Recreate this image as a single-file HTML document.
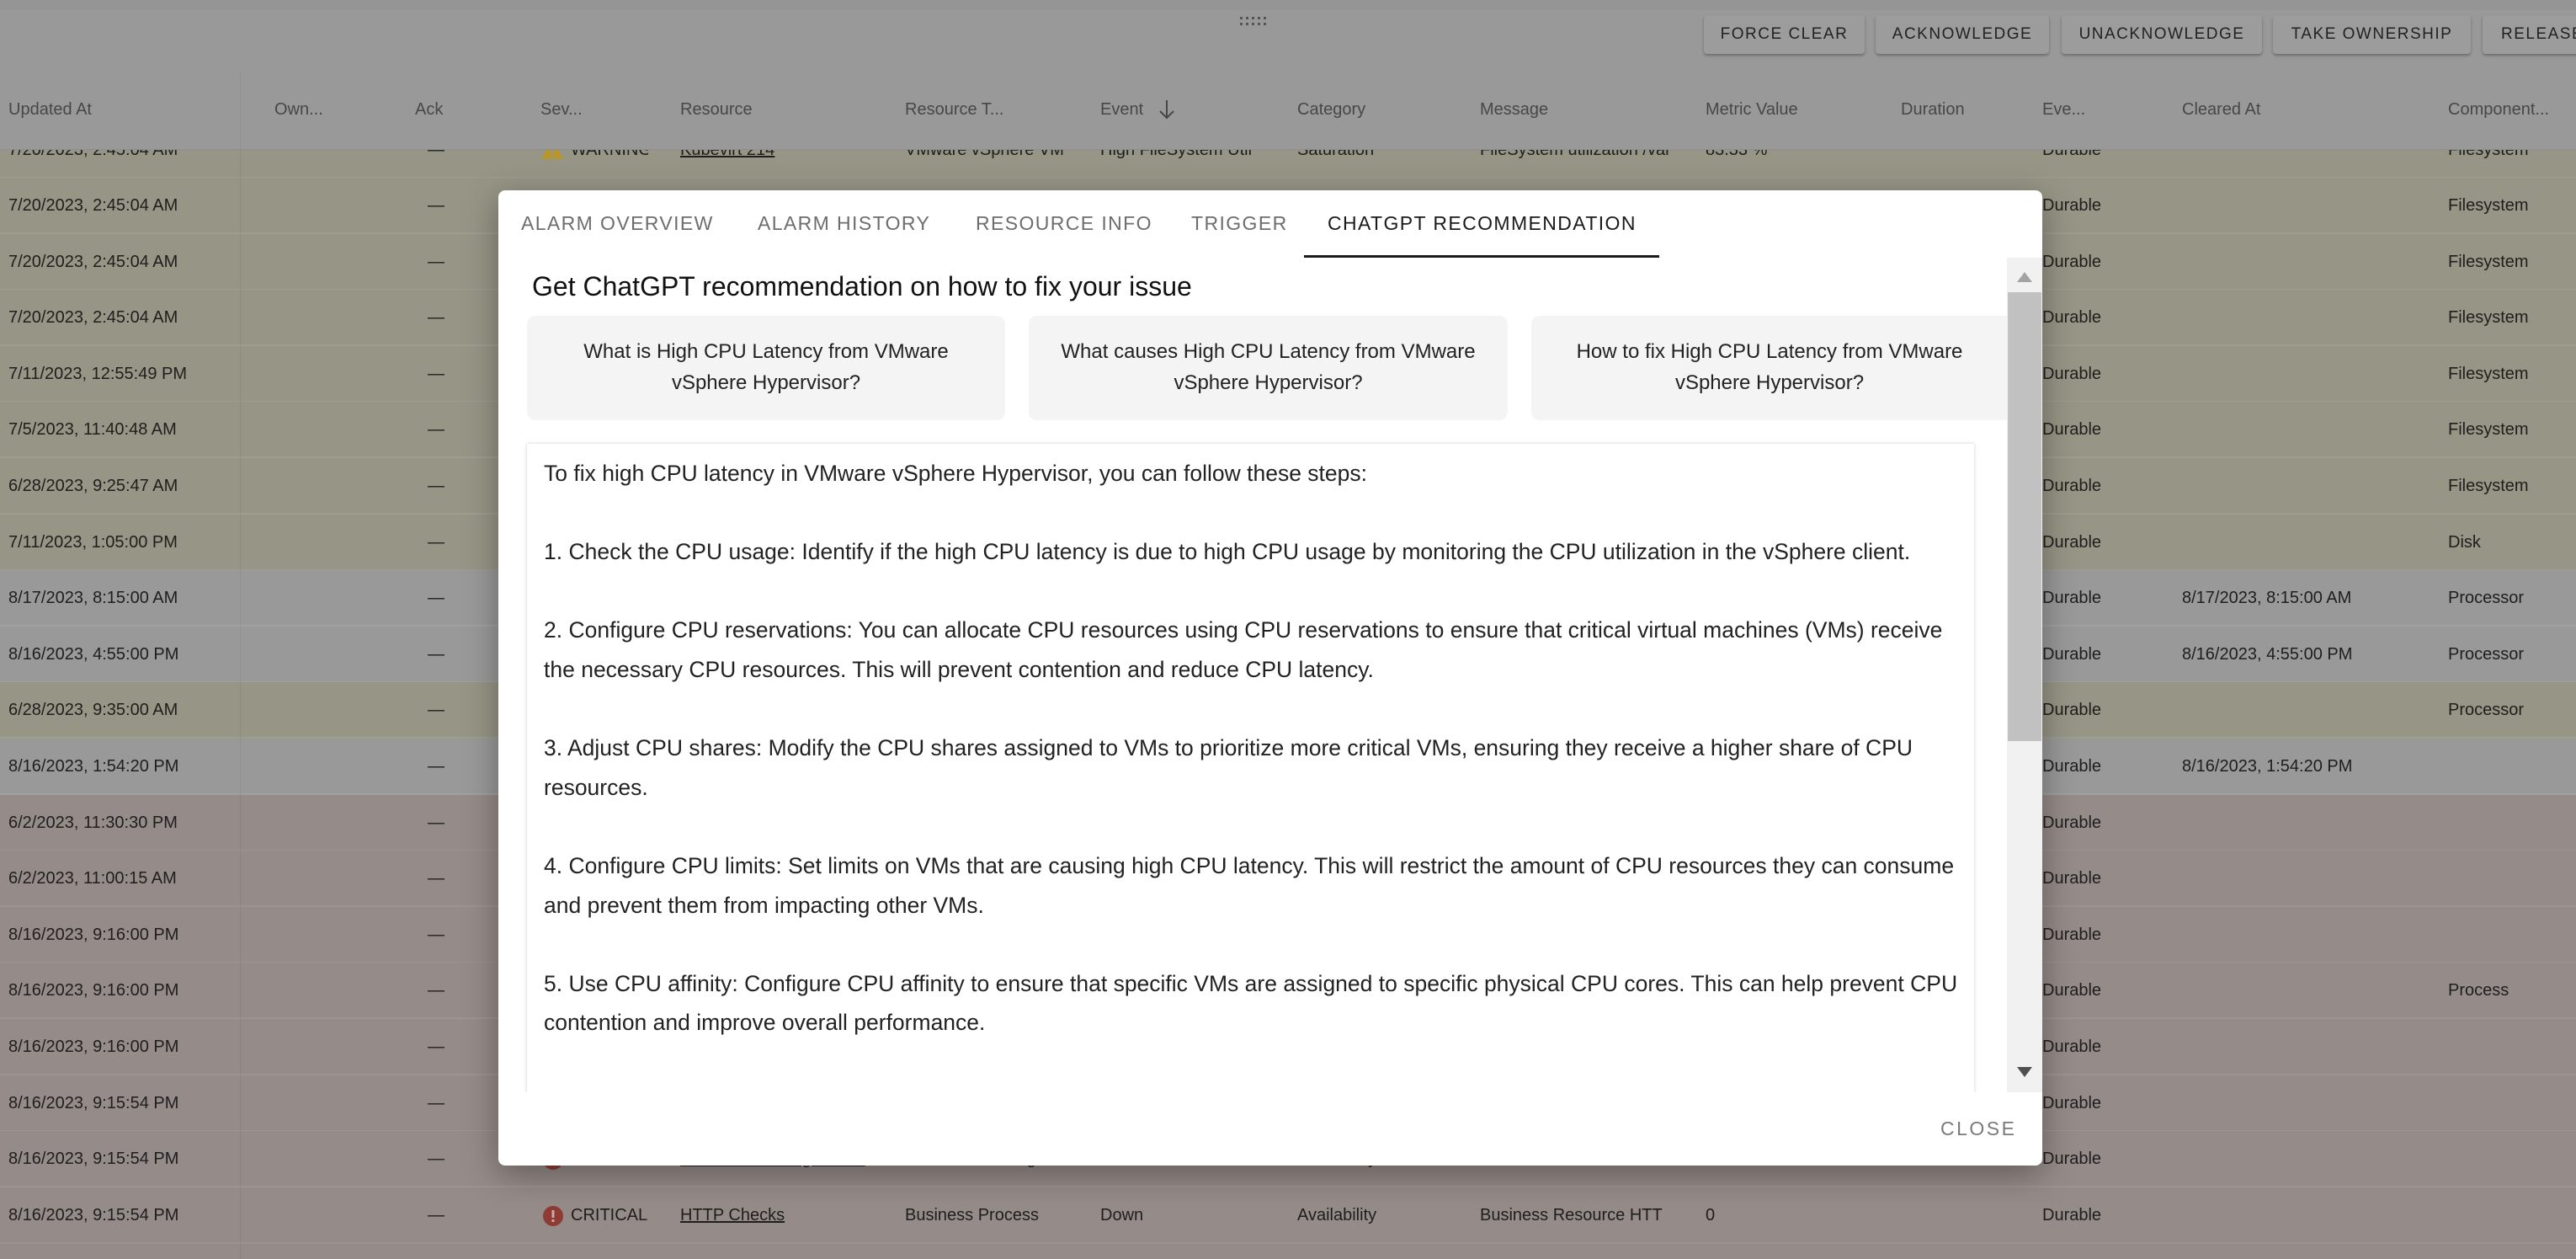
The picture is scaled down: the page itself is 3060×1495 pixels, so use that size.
<!DOCTYPE html>
<html style="overflow:hidden;width:3060px;height:1495px"><head><meta charset="utf-8"><style>
*{margin:0;padding:0;box-sizing:border-box}
body{width:3060px;height:1495px;overflow:hidden;background:#999;font-family:"Liberation Sans",Arial,sans-serif;position:relative}
.a{position:absolute;white-space:nowrap}
.row{position:absolute;left:0;width:3060px;height:67px;border-bottom:2px solid rgba(255,255,255,0.08)}
.y{background:#979585}.g{background:#999999}.p{background:#958b88}
.t{position:absolute;font-size:20px;color:#1e1e1e;line-height:67px;top:0;white-space:nowrap}
.hd{position:absolute;top:0;left:0;width:3060px;height:178px;background:#999;border-bottom:1px solid #8e8e8e}
.hd span{position:absolute;top:119px;font-size:20px;color:#474747;white-space:nowrap}
.btn{position:absolute;top:18px;height:46px;background:#9c9c9c;border-radius:4px;box-shadow:0 2px 3px rgba(0,0,0,0.3);font-size:19px;letter-spacing:1.5px;color:#222;line-height:46px;text-align:center;font-weight:500}
.modal{position:absolute;left:592px;top:226px;width:1834px;height:1158px;background:#fff;border-radius:8px;overflow:hidden;box-shadow:0 10px 40px rgba(0,0,0,0.35)}
.tab{position:absolute;top:26px;font-size:23px;letter-spacing:1.4px;color:#6d6d6d;white-space:nowrap}
.card{position:absolute;top:149px;height:124px;background:#f4f4f4;border-radius:10px;font-size:24px;color:#222;text-align:center;line-height:37px;padding-top:24px}
.ans{position:absolute;left:34px;top:301px;width:1719px;height:800px;background:#fff;box-shadow:0 0 4px rgba(0,0,0,0.2);font-size:26.5px;color:#222;line-height:46.6px;padding:12px 20px}
</style></head><body>

<div class="row y" style="top:145px"><span class="t" style="left:10px">7/20/2023, 2:45:04 AM</span><span class="t" style="left:508px">—</span>
<svg class="a" style="left:643px;top:22px" width="26" height="22" viewBox="0 0 26 22"><path d="M13 0 L26 22 L0 22Z" fill="#b8962c"/><rect x="11.5" y="7" width="3" height="8" fill="#979585"/><rect x="11.5" y="17" width="3" height="3" fill="#979585"/></svg>
<span class="t" style="left:678px;width:92px;overflow:hidden">WARNING</span><span class="t" style="left:808px;text-decoration:underline">Kubevirt 214</span><span class="t" style="left:1075px;width:200px;overflow:hidden">VMware vSphere VM</span><span class="t" style="left:1307px;width:210px;overflow:hidden">High FileSystem Util</span><span class="t" style="left:1541px">Saturation</span><span class="t" style="left:1758px;width:230px;overflow:hidden">FileSystem utilization /var</span><span class="t" style="left:2026px">83.33 %</span><span class="t" style="left:2426px">Durable</span><span class="t" style="left:2908px">Filesystem</span></div>
<div class="row y" style="top:211px"><span class="t" style="left:10px">7/20/2023, 2:45:04 AM</span><span class="t" style="left:508px">—</span><span class="t" style="left:2426px">Durable</span><span class="t" style="left:2908px">Filesystem</span></div>
<div class="row y" style="top:278px"><span class="t" style="left:10px">7/20/2023, 2:45:04 AM</span><span class="t" style="left:508px">—</span><span class="t" style="left:2426px">Durable</span><span class="t" style="left:2908px">Filesystem</span></div>
<div class="row y" style="top:344px"><span class="t" style="left:10px">7/20/2023, 2:45:04 AM</span><span class="t" style="left:508px">—</span><span class="t" style="left:2426px">Durable</span><span class="t" style="left:2908px">Filesystem</span></div>
<div class="row y" style="top:411px"><span class="t" style="left:10px">7/11/2023, 12:55:49 PM</span><span class="t" style="left:508px">—</span><span class="t" style="left:2426px">Durable</span><span class="t" style="left:2908px">Filesystem</span></div>
<div class="row y" style="top:477px"><span class="t" style="left:10px">7/5/2023, 11:40:48 AM</span><span class="t" style="left:508px">—</span><span class="t" style="left:2426px">Durable</span><span class="t" style="left:2908px">Filesystem</span></div>
<div class="row y" style="top:544px"><span class="t" style="left:10px">6/28/2023, 9:25:47 AM</span><span class="t" style="left:508px">—</span><span class="t" style="left:2426px">Durable</span><span class="t" style="left:2908px">Filesystem</span></div>
<div class="row y" style="top:611px"><span class="t" style="left:10px">7/11/2023, 1:05:00 PM</span><span class="t" style="left:508px">—</span><span class="t" style="left:2426px">Durable</span><span class="t" style="left:2908px">Disk</span></div>
<div class="row g" style="top:677px"><span class="t" style="left:10px">8/17/2023, 8:15:00 AM</span><span class="t" style="left:508px">—</span><span class="t" style="left:2426px">Durable</span><span class="t" style="left:2592px">8/17/2023, 8:15:00 AM</span><span class="t" style="left:2908px">Processor</span></div>
<div class="row g" style="top:744px"><span class="t" style="left:10px">8/16/2023, 4:55:00 PM</span><span class="t" style="left:508px">—</span><span class="t" style="left:2426px">Durable</span><span class="t" style="left:2592px">8/16/2023, 4:55:00 PM</span><span class="t" style="left:2908px">Processor</span></div>
<div class="row y" style="top:810px"><span class="t" style="left:10px">6/28/2023, 9:35:00 AM</span><span class="t" style="left:508px">—</span><span class="t" style="left:2426px">Durable</span><span class="t" style="left:2908px">Processor</span></div>
<div class="row g" style="top:877px"><span class="t" style="left:10px">8/16/2023, 1:54:20 PM</span><span class="t" style="left:508px">—</span><span class="t" style="left:2426px">Durable</span><span class="t" style="left:2592px">8/16/2023, 1:54:20 PM</span></div>
<div class="row p" style="top:944px"><span class="t" style="left:10px">6/2/2023, 11:30:30 PM</span><span class="t" style="left:508px">—</span><span class="t" style="left:2426px">Durable</span></div>
<div class="row p" style="top:1010px"><span class="t" style="left:10px">6/2/2023, 11:00:15 AM</span><span class="t" style="left:508px">—</span><span class="t" style="left:2426px">Durable</span></div>
<div class="row p" style="top:1077px"><span class="t" style="left:10px">8/16/2023, 9:16:00 PM</span><span class="t" style="left:508px">—</span><span class="t" style="left:2426px">Durable</span></div>
<div class="row p" style="top:1143px"><span class="t" style="left:10px">8/16/2023, 9:16:00 PM</span><span class="t" style="left:508px">—</span><span class="t" style="left:2426px">Durable</span><span class="t" style="left:2908px">Process</span></div>
<div class="row p" style="top:1210px"><span class="t" style="left:10px">8/16/2023, 9:16:00 PM</span><span class="t" style="left:508px">—</span><span class="t" style="left:2426px">Durable</span></div>
<div class="row p" style="top:1277px"><span class="t" style="left:10px">8/16/2023, 9:15:54 PM</span><span class="t" style="left:508px">—</span><span class="t" style="left:2426px">Durable</span></div>
<div class="row p" style="top:1343px"><span class="t" style="left:10px">8/16/2023, 9:15:54 PM</span><span class="t" style="left:508px">—</span>
<svg class="a" style="left:645px;top:22px" width="24" height="24"><circle cx="12" cy="12" r="12" fill="#8e3b34"/></svg><span class="t" style="left:678px">CRITICAL</span><span class="t" style="left:808px;text-decoration:underline">Service Checking Not Av</span><span class="t" style="left:1075px">Service Checking</span><span class="t" style="left:1307px">Down</span><span class="t" style="left:1541px">Availability</span><span class="t" style="left:1758px;width:230px;overflow:hidden">Business Resource Serv</span><span class="t" style="left:2026px">0</span><span class="t" style="left:2426px">Durable</span></div>
<div class="row p" style="top:1410px"><span class="t" style="left:10px">8/16/2023, 9:15:54 PM</span><span class="t" style="left:508px">—</span>
<svg class="a" style="left:645px;top:22px" width="24" height="24"><circle cx="12" cy="12" r="12" fill="#8e3b34"/><rect x="10.5" y="5" width="3" height="9" fill="#caa"/><rect x="10.5" y="16" width="3" height="3" fill="#caa"/></svg><span class="t" style="left:678px">CRITICAL</span><span class="t" style="left:808px;text-decoration:underline">HTTP Checks</span><span class="t" style="left:1075px">Business Process</span><span class="t" style="left:1307px">Down</span><span class="t" style="left:1541px">Availability</span><span class="t" style="left:1758px;width:230px;overflow:hidden">Business Resource HTT</span><span class="t" style="left:2026px">0</span><span class="t" style="left:2426px">Durable</span></div>
<div class="row p" style="top:1477px;height:18px;border:0"></div>
<div class="a" style="left:285px;top:84px;width:1px;height:1411px;background:rgba(0,0,0,0.06)"></div>

<div class="hd">
<div class="a" style="left:0;top:0;width:3060px;height:12px;background:#959595"></div>
<svg class="a" style="left:1473px;top:20px" width="32" height="12"><g fill="#555"><rect x="0" y="0" width="3" height="3"/><rect x="7" y="0" width="3" height="3"/><rect x="14" y="0" width="3" height="3"/><rect x="21" y="0" width="3" height="3"/><rect x="28" y="0" width="3" height="3"/><rect x="0" y="7" width="3" height="3"/><rect x="7" y="7" width="3" height="3"/><rect x="14" y="7" width="3" height="3"/><rect x="21" y="7" width="3" height="3"/><rect x="28" y="7" width="3" height="3"/></g></svg>
<div class="btn" style="left:2024px;width:191px">FORCE CLEAR</div>
<div class="btn" style="left:2228px;width:206px">ACKNOWLEDGE</div>
<div class="btn" style="left:2449px;width:238px">UNACKNOWLEDGE</div>
<div class="btn" style="left:2700px;width:235px">TAKE OWNERSHIP</div>
<div class="btn" style="left:2949px;width:160px;text-align:left;padding-left:22px">RELEASE</div>
<div class="a" style="left:285px;top:84px;width:1px;height:94px;background:rgba(0,0,0,0.06)"></div>
<span style="left:10px">Updated At</span><span style="left:326px">Own...</span><span style="left:493px">Ack</span><span style="left:642px">Sev...</span><span style="left:808px">Resource</span><span style="left:1075px">Resource T...</span><span style="left:1307px">Event</span>
<svg class="a" style="left:1375px;top:117px" width="22" height="26"><path d="M11 2 V23 M3 15 L11 23 L19 15" stroke="#474747" stroke-width="2" fill="none"/></svg>
<span style="left:1541px">Category</span><span style="left:1758px">Message</span><span style="left:2026px">Metric Value</span><span style="left:2258px">Duration</span><span style="left:2426px">Eve...</span><span style="left:2592px">Cleared At</span><span style="left:2908px">Component...</span>
</div>

<div class="modal">
<span class="tab" style="left:27px">ALARM OVERVIEW</span>
<span class="tab" style="left:308px">ALARM HISTORY</span>
<span class="tab" style="left:567px">RESOURCE INFO</span>
<span class="tab" style="left:823px">TRIGGER</span>
<span class="tab" style="left:985px;color:#1a1a1a">CHATGPT RECOMMENDATION</span>
<div class="a" style="left:957px;top:77px;width:422px;height:3px;background:#1a1a1a"></div>
<div class="a" style="left:0;top:80px;width:1793px;height:991px;overflow:hidden">
  <div class="a" style="left:40px;top:16px;font-size:32px;color:#111">Get ChatGPT recommendation on how to fix your issue</div>
  <div class="card" style="left:34px;width:568px;top:69px">What is High CPU Latency from VMware<br>vSphere Hypervisor?</div>
  <div class="card" style="left:630px;width:569px;top:69px">What causes High CPU Latency from VMware<br>vSphere Hypervisor?</div>
  <div class="card" style="left:1227px;width:580px;top:69px;padding-right:14px">How to fix High CPU Latency from VMware<br>vSphere Hypervisor?</div>
  <div class="ans" style="top:221px">To fix high CPU latency in VMware vSphere Hypervisor, you can follow these steps:<br><br>1. Check the CPU usage: Identify if the high CPU latency is due to high CPU usage by monitoring the CPU utilization in the vSphere client.<br><br>2. Configure CPU reservations: You can allocate CPU resources using CPU reservations to ensure that critical virtual machines (VMs) receive<br>the necessary CPU resources. This will prevent contention and reduce CPU latency.<br><br>3. Adjust CPU shares: Modify the CPU shares assigned to VMs to prioritize more critical VMs, ensuring they receive a higher share of CPU<br>resources.<br><br>4. Configure CPU limits: Set limits on VMs that are causing high CPU latency. This will restrict the amount of CPU resources they can consume<br>and prevent them from impacting other VMs.<br><br>5. Use CPU affinity: Configure CPU affinity to ensure that specific VMs are assigned to specific physical CPU cores. This can help prevent CPU<br>contention and improve overall performance.</div>
</div>
<div class="a" style="left:1792px;top:80px;width:42px;height:991px;background:#f1f1f1"></div>
<div class="a" style="left:1793px;top:121px;width:40px;height:533px;background:#c1c1c1"></div>
<svg class="a" style="left:1803px;top:96px" width="20" height="14"><path d="M10 1 L19 13 L1 13Z" fill="#a3a3a3"/></svg>
<svg class="a" style="left:1803px;top:1040px" width="20" height="14"><path d="M1 1 L19 1 L10 13Z" fill="#505050"/></svg>
<div class="a" style="left:1713px;top:1101px;font-size:23px;letter-spacing:2.5px;color:#7a7a7a">CLOSE</div>
</div>
</body></html>
